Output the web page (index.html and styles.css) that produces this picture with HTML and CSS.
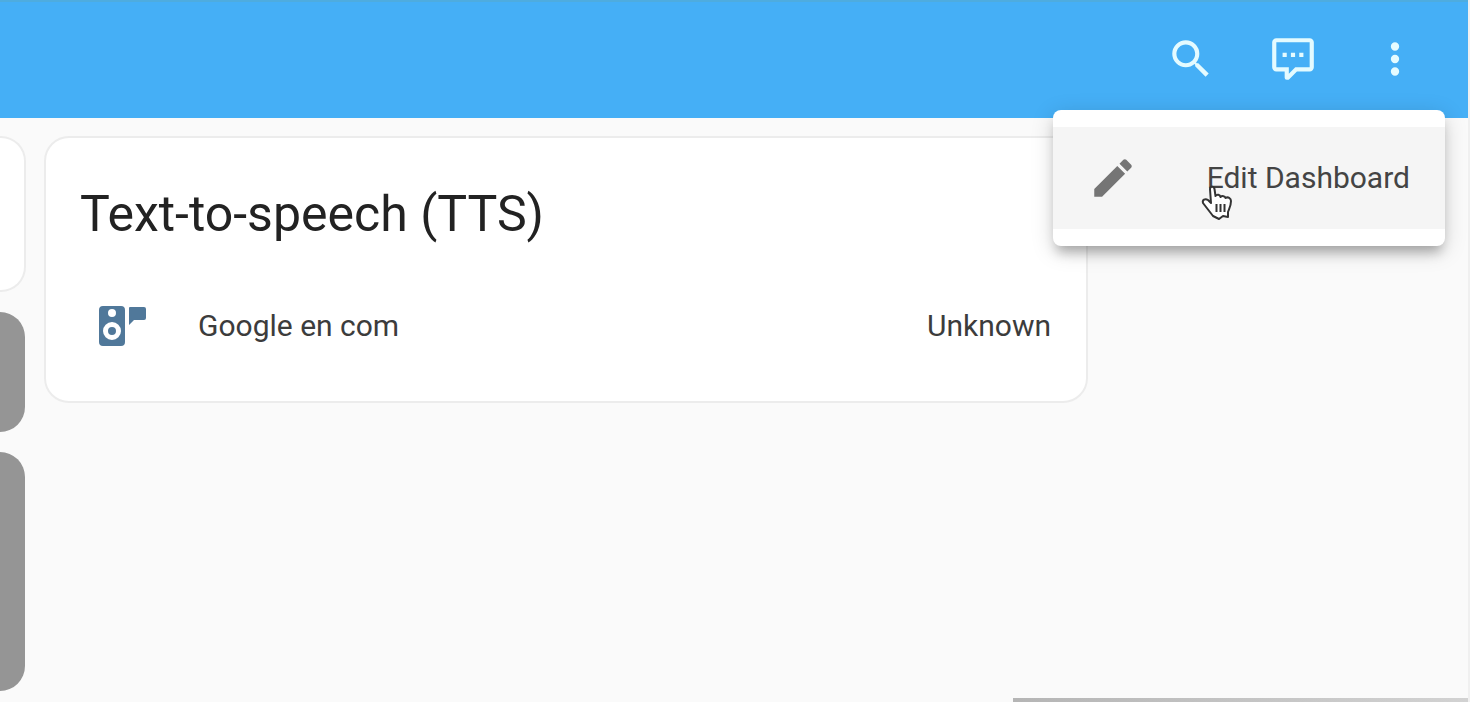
FILE: index.html
```html
<!DOCTYPE html>
<html lang="en">
<head>
<meta charset="utf-8">
<meta name="viewport" content="width=device-width, initial-scale=1">
<title>Dashboard</title>
<link rel="stylesheet" href="styles.css">
</head>
<body>
<header class="toolbar">
  <button class="icon-button" type="button" aria-label="Search">
    <svg class="icon" viewBox="0 0 24 24" aria-hidden="true"><path d="M9.5,3A6.5,6.5 0 0,1 16,9.5C16,11.11 15.41,12.59 14.44,13.73L14.71,14H15.5L20.5,19L19,20.5L14,15.5V14.71L13.73,14.44C12.59,15.41 11.11,16 9.5,16A6.5,6.5 0 0,1 3,9.5A6.5,6.5 0 0,1 9.5,3M9.5,5C7,5 5,7 5,9.5C5,12 7,14 9.5,14C12,14 14,12 14,9.5C14,7 12,5 9.5,5Z"/></svg>
  </button>
  <button class="icon-button" type="button" aria-label="Assist">
    <svg class="icon" viewBox="0 0 24 24" aria-hidden="true"><path d="M9,22A1,1 0 0,1 8,21V18H4A2,2 0 0,1 2,16V4C2,2.89 2.9,2 4,2H20A2,2 0 0,1 22,4V16A2,2 0 0,1 20,18H13.9L10.2,21.71C10,21.9 9.75,22 9.5,22V22H9M10,16V19.08L13.08,16H20V4H4V16H10M17,11H15V9H17V11M13,11H11V9H13V11M9,11H7V9H9V11Z"/></svg>
  </button>
  <div class="menu-anchor">
    <button class="icon-button" type="button" aria-label="Open menu" aria-expanded="true">
      <svg class="icon" viewBox="0 0 24 24" aria-hidden="true"><path d="M12,16A2,2 0 0,1 14,18A2,2 0 0,1 12,20A2,2 0 0,1 10,18A2,2 0 0,1 12,16M12,10A2,2 0 0,1 14,12A2,2 0 0,1 12,14A2,2 0 0,1 10,12A2,2 0 0,1 12,10M12,4A2,2 0 0,1 14,6A2,2 0 0,1 12,8A2,2 0 0,1 10,6A2,2 0 0,1 12,4Z"/></svg>
    </button>
    <div class="menu" role="menu">
      <button class="menu-item" type="button" role="menuitem">
        <svg class="icon" viewBox="0 0 24 24" aria-hidden="true"><path d="M20.71,7.04C21.1,6.65 21.1,6 20.71,5.63L18.37,3.29C18,2.9 17.35,2.9 16.96,3.29L15.12,5.12L18.87,8.87M3,17.25V21H6.75L17.81,9.93L14.06,6.18L3,17.25Z"/></svg>
        <span>Edit Dashboard</span>
      </button>
      <svg class="pointer" viewBox="0 0 32 36" aria-hidden="true">
        <path d="M9 4C9 1 13 1 13.500 4L14.500 11C16 9 19 9.500 19.500 12C21 10.500 24 11 24.500 13C27 11.500 30 13 30 16C30 21 28 24 27 27V32L22 31L18 34L12 31C9 27 5 22 2 18C1 15 4 13 7 15L10 18Z"/>
        <path d="M15.500 19V27M19.500 19V27M23.500 19V27"/>
      </svg>
    </div>
  </div>
</header>
<main class="view">
  <div class="column">
    <section class="tile tile-light"></section>
    <section class="tile tile-short"></section>
    <section class="tile tile-tall"></section>
  </div>
  <section class="card">
    <h1 class="card-title">Text-to-speech (TTS)</h1>
    <div class="entity">
      <svg class="icon entity-icon" viewBox="0 0 50 50" aria-hidden="true">
        <path fill-rule="evenodd" d="M5 5H23Q27 5 27 9V41Q27 45 23 45H5Q1 45 1 41V9Q1 5 5 5ZM14 8A4 4 0 1 0 14 16A4 4 0 1 0 14 8ZM14 21A9 9 0 1 0 14 39A9 9 0 1 0 14 21ZM14 26A4 4 0 1 1 14 34A4 4 0 1 1 14 26Z"/>
        <path d="M32 6H46Q48 6 48 8V17Q48 19 46 19H36L31 24V7Q31 6 32 6Z"/>
      </svg>
      <span class="entity-name">Google en com</span>
      <span>Unknown</span>
    </div>
  </section>
</main>
<footer class="bottom-strip"></footer>
</body>
</html>
```
FILE: styles.css
```css
* { box-sizing: border-box; }
body {
  margin: 0;
  min-height: 100vh;
  display: flex;
  flex-direction: column;
  background: #fafafa;
  border-right: 2px solid #f0f0f0;
  color: #3c3c3c;
  font: 30px/40px Roboto, sans-serif;
}
button { border: 0; margin: 0; padding: 0; background: none; font: inherit; color: inherit; }
.icon { display: block; flex: none; width: 50px; height: 50px; fill: currentColor; }
.icon-button { display: block; }
.toolbar {
  display: flex;
  justify-content: flex-end;
  align-items: center;
  gap: 52px;
  height: 118px;
  margin-right: -2px;
  padding: 0 48px 2px 0;
  background: #45aff6;
  border-top: 2px solid #4eacdf;
  border-right: 2px solid #5cb4ef;
  color: #e4fbff;
}
.menu-anchor { position: relative; }
.menu {
  position: absolute;
  z-index: 1;
  top: 76px;
  right: -25px;
  padding: 17px 0;
  border-radius: 8px;
  background: #fff;
  box-shadow: 0 10px 12px -4px rgba(0, 0, 0, .26), 0 5px 22px rgba(0, 0, 0, .17);
}
.menu-item {
  display: flex;
  align-items: center;
  gap: 69px;
  height: 102px;
  padding: 0 35px;
  background: #f5f5f5;
  color: #444;
  white-space: nowrap;
}
.menu-item .icon { color: #757575; }
.pointer {
  position: absolute;
  top: 75px;
  left: 148px;
  width: 32px;
  height: 36px;
  fill: #fff;
  stroke: #333;
  stroke-width: 2;
  stroke-linejoin: round;
}
.view {
  flex: 1;
  display: grid;
  grid-template-columns: 26px 1fr 362px;
  gap: 18px;
  align-items: start;
  padding-top: 18px;
}
.column { display: grid; gap: 20px; }
.tile { border-radius: 0 25px 25px 0; margin-right: 1px; background: #959595; }
.tile-light { height: 156px; margin-right: 0; background: #fff; border: 2px solid #ececec; border-left: 0; }
.tile-short { height: 120px; }
.tile-tall { height: 239px; }
.card {
  padding: 46px 35px 35px 34px;
  border: 2px solid #ececec;
  border-radius: 25px;
  background: #fff;
}
.card-title { margin: 0 0 42px; font-size: 50px; line-height: 60px; font-weight: 400; color: #222; }
.entity { display: flex; align-items: center; height: 80px; padding-left: 18px; gap: 50px; }
.entity-icon { color: #50789a; }
.entity-name { flex: 1; }
.bottom-strip { width: 31%; height: 4px; margin-left: auto; background: linear-gradient(90deg, #b5b5b5, #d2d2d2); }
```
